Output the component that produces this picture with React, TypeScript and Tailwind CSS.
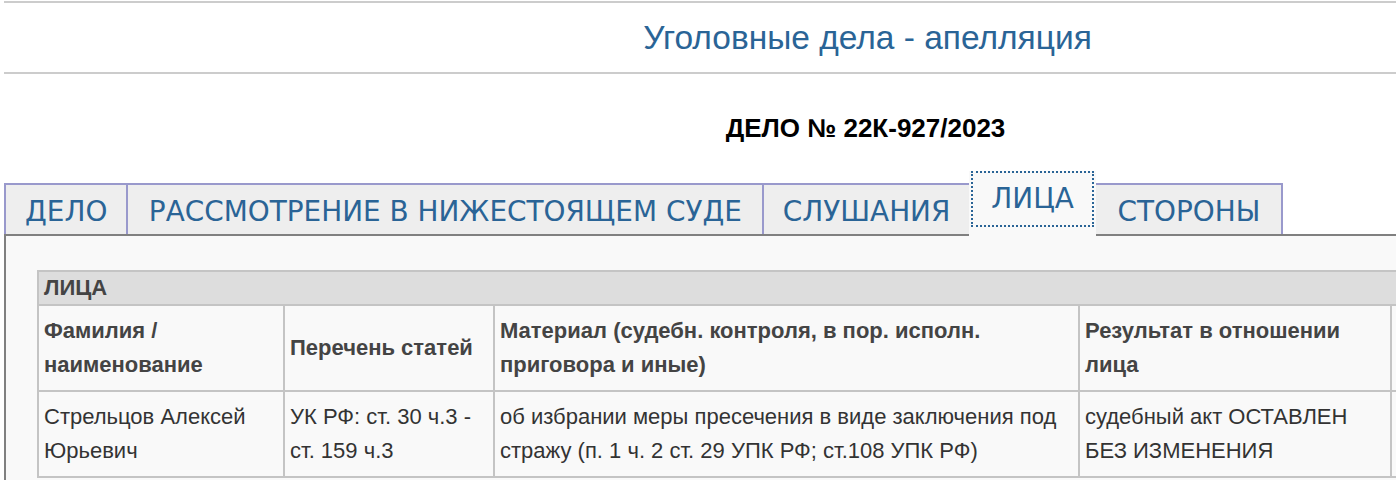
import React from "react";

const tabs = [
  { label: "ДЕЛО", active: false, pad: "px-[19px]" },
  { label: "РАССМОТРЕНИЕ В НИЖЕСТОЯЩЕМ СУДЕ", active: false, pad: "px-[20.5px]" },
  { label: "СЛУШАНИЯ", active: false, pad: "px-[18.5px]" },
  { label: "ЛИЦА", active: true, pad: "px-[18.5px]" },
  { label: "СТОРОНЫ", active: false, pad: "px-[21px]" },
];

const cell = "border-2 border-[#c4c4c4] px-[5px] py-[8px] align-middle";

export default function App() {
  return (
    <div className="w-[1396px] h-[480px] overflow-hidden bg-white" style={{ fontFamily: '"Liberation Sans", Arial, sans-serif' }}>
      <div className="pl-1 pt-[1px]">
        <div className="border-t-2 border-b-2 border-[#cccccc] h-[73px] flex items-center pl-[335px] justify-center">
          <h1 className="text-[33.5px] text-[#2a6496] leading-none">Уголовные дела - апелляция</h1>
        </div>
      </div>
      <div className="pl-[335px] text-center pt-[39px] h-[97px]">
        <div className="text-[26px] font-bold text-black leading-[30px]">ДЕЛО № 22К-927/2023</div>
      </div>
      <div className="pl-1">
        <ul className="flex items-end h-[63px]" style={{ fontFamily: '"DejaVu Sans", Verdana, sans-serif' }}>
          {tabs.map((t, i) =>
            t.active ? (
              <li key={i} className="-ml-[2px] relative z-10 bg-[#f9f9f9] h-[65px] -mb-[2px] px-[2px] pb-[9px]">
                <div className={`h-full border-2 border-dotted border-[#2a6496] ${t.pad} pt-[11px] text-[27.9px] text-[#2a6496] leading-[30px] whitespace-nowrap`}>
                  {t.label}
                </div>
              </li>
            ) : (
              <li
                key={i}
                className={`${i === 0 ? "" : "-ml-[2px]"} ${t.pad} bg-[#eeeeee] border-2 border-b-0 border-[#9999cc] h-[51px] pt-[12px] text-[27.9px] text-[#2a6496] leading-[30px] whitespace-nowrap`}
              >
                {t.label}
              </li>
            )
          )}
        </ul>
        <div className="border-2 border-r-0 border-[#808080] bg-[#f9f9f9] pl-[31px] pt-[34px] pb-6 w-[1600px]">
          <table className="border-collapse text-[#444] text-[22px] leading-[34px] w-[1500px] table-fixed">
            <colgroup>
              <col className="w-[246px]" />
              <col className="w-[210px]" />
              <col className="w-[585px]" />
              <col className="w-[312px]" />
              <col />
            </colgroup>
            <tbody>
              <tr>
                <td colSpan={5} className="border-2 border-[#c4c4c4] bg-[#dddddd] font-bold px-[5px] py-0 leading-[32px]">ЛИЦА</td>
              </tr>
              <tr className="font-bold">
                <td className={cell}>Фамилия / наименование</td>
                <td className={cell}>Перечень статей</td>
                <td className={cell}>Материал (судебн. контроля, в пор. исполн. приговора и иные)</td>
                <td className={cell}>Результат в отношении лица</td>
                <td className={cell}></td>
              </tr>
              <tr className="text-[#333]">
                <td className={cell}>Стрельцов Алексей Юрьевич</td>
                <td className={cell}>УК РФ: ст. 30 ч.3 - ст. 159 ч.3</td>
                <td className={cell}>об избрании меры пресечения в виде заключения под стражу (п. 1 ч. 2 ст. 29 УПК РФ; ст.108 УПК РФ)</td>
                <td className={cell}>судебный акт ОСТАВЛЕН БЕЗ ИЗМЕНЕНИЯ</td>
                <td className={cell}></td>
              </tr>
            </tbody>
          </table>
        </div>
      </div>
    </div>
  );
}
